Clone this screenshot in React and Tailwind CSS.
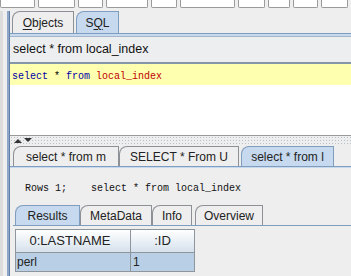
import React from 'react';

const sans = { fontFamily: '"Liberation Sans", Arial, sans-serif' };
const mono = { fontFamily: '"Liberation Mono", "Courier New", monospace' };

function Tab({ label, selected, className = '', underlineIndex }) {
  return (
    <div
      className={`h-full flex items-center justify-center border border-b-0 rounded-tl-[8px] text-[12px] text-[#222] ${
        selected ? 'bg-[#c6d9ee] border-[#7f9dbf]' : 'bg-[#eeeeee] border-[#8d9095]'
      } ${className}`}
    >
      {underlineIndex === undefined ? (
        label
      ) : (
        <span>
          {label.slice(0, underlineIndex)}
          <span className="underline underline-offset-2">{label[underlineIndex]}</span>
          {label.slice(underlineIndex + 1)}
        </span>
      )}
    </div>
  );
}

function ToolbarStub() {
  const widths = ['w-[35px]', 'w-[37px]', 'w-[25px]', 'w-[42px]', 'w-[26px]', 'w-[55px]', 'w-[27px]', 'w-[22px]', 'w-[25px]', 'w-[27px]'];
  return (
    <div className="h-[8px] flex gap-[3px] overflow-hidden">
      {widths.map((w, i) => (
        <div key={i} className={`${w} h-[8px] bg-white border border-t-0 border-[#9a9a9a] rounded-b-[2px]`} />
      ))}
    </div>
  );
}

export default function App() {
  return (
    <div className="w-[351px] h-[276px] overflow-hidden bg-[#eeeeee] flex flex-col" style={sans}>
      <ToolbarStub />
      <div className="flex-1 flex min-h-0 pt-[3px]">
        {/* left edge of split pane */}
        <div className="w-[10px] shrink-0 flex">
          <div className="w-[3px] bg-[#dcdcdc]" />
          <div className="flex-1" />
          <div className="w-[3px] bg-[#8fa6c6] border-r border-[#5f7ea8]" />
        </div>

        <div className="flex-1 flex flex-col min-w-0">
          {/* upper tabs */}
          <div className="h-[22px] flex items-end gap-[2px] pl-[2px] shrink-0">
            <Tab label="Objects" className="w-[62px]" underlineIndex={0} />
            <Tab label="SQL" selected className="w-[43px]" underlineIndex={1} />
          </div>
          <div className="h-[3px] bg-[#c6d9ee] border-t border-[#7f9dbf] shrink-0" />

          {/* query field */}
          <div className="h-[28px] flex items-center pl-[3px] pb-[1px] bg-[#edeef0] border-t border-[#a4b6cc] border-b-2 border-b-[#8496a8] text-[12.5px] text-[#111] shrink-0">
            select * from local_index
          </div>

          {/* editor */}
          <div className="h-[71px] bg-white flex flex-col shrink-0">
            <div className="h-[21px] bg-[#ffffb0] flex items-center pl-[2px] pt-[3px] text-[10px]" style={mono}>
              <span className="text-[#0000a8]">select</span>
              <span className="text-black">&nbsp;*&nbsp;</span>
              <span className="text-[#0000a8]">from</span>
              <span className="text-[#c00000]">&nbsp;local_index</span>
            </div>
          </div>

          {/* splitter */}
          <div className="h-[10px] border-t border-[#9a9a9a] flex items-center gap-[2px] pl-[4px] shrink-0 bg-[radial-gradient(#b8c0c8_0.6px,transparent_0.8px)] bg-[length:3px_3px]">
            <svg width="8" height="5" viewBox="0 0 8 5"><path d="M0 5 L4 1 L8 5 Z" fill="#333" /></svg>
            <svg width="8" height="5" viewBox="0 0 8 5"><path d="M0 0 L8 0 L4 4 Z" fill="#333" /></svg>
          </div>

          {/* result tabs */}
          <div className="h-[21px] flex items-end pl-[3px] pt-[1px] shrink-0">
            <Tab label="select * from m" className="w-[106px] text-[12.5px]" />
            <Tab label="SELECT * From U" className="w-[120px] text-[12.5px]" />
            <Tab label="select * from l" selected className="w-[93px] ml-[2px] text-[12.5px]" />
          </div>
          <div className="h-[2px] bg-[#c6d9ee] border-t border-[#7f9dbf] shrink-0" />

          <div className="flex-1 flex flex-col pl-[3px]">
            <div className="h-[37px] flex items-end pb-[9px] pl-[12px] text-[10px] text-[#111] whitespace-pre" style={mono}>
              {'Rows 1;    select * from local_index'}
            </div>
            <div className="h-[20px] flex items-end gap-0 pl-[2px]">
              <Tab label="Results" selected className="w-[65px]" />
              <Tab label="MetaData" className="w-[72px]" />
              <Tab label="Info" className="w-[40px]" />
              <Tab label="Overview" className="w-[68px] ml-[3px]" />
            </div>
            <div className="border-t border-[#7f9dbf] flex-1 pt-[3px] pl-[2px]">
              <div className="w-[180px] border border-[#8e959c] text-[12px] text-[#222]">
                <div className="h-[23px] flex bg-gradient-to-b from-white to-[#d6e1ec] border-b border-[#8e959c] text-[13px]">
                  <div className="w-[115px] border-r border-[#8e959c] flex items-center justify-center pr-[6px]">0:LASTNAME</div>
                  <div className="flex-1 flex items-center justify-center">:ID</div>
                </div>
                <div className="h-[18px] flex bg-[#b9cfe6]">
                  <div className="w-[115px] border-r border-[#8e959c] flex items-center pl-[1px]">perl</div>
                  <div className="flex-1 flex items-center pl-[2px]">1</div>
                </div>
              </div>
            </div>
          </div>
        </div>
      </div>
    </div>
  );
}
